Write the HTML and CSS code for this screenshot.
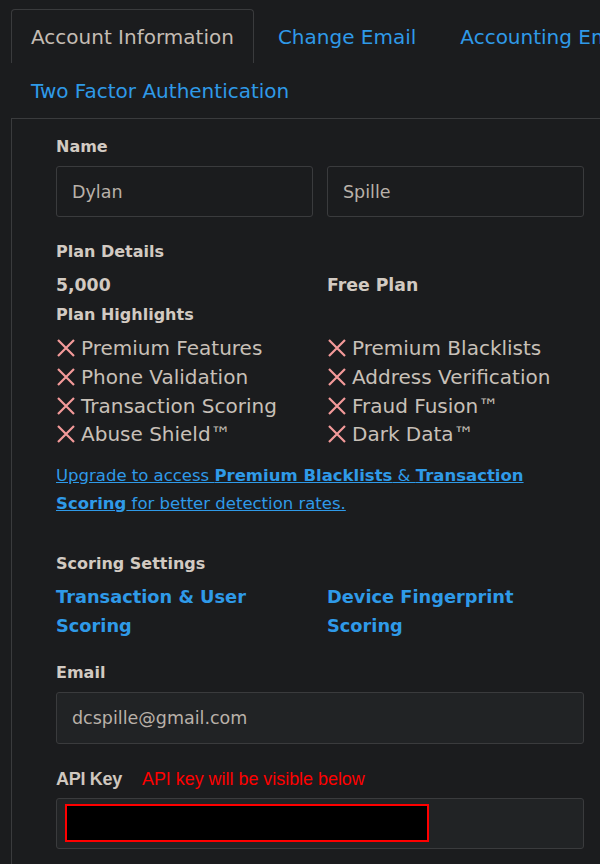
FILE: index.html
```html
<!DOCTYPE html>
<html>
<head>
<meta charset="utf-8">
<link rel="stylesheet" href="styles.css">
</head>
<body>
<div class="page">
  <ul class="tabs">
    <li class="tab active">Account Information</li>
    <li class="tab"><a href="#">Change Email</a></li>
    <li class="tab"><a href="#">Accounting Emails</a></li>
    <li class="tab"><a href="#">Two Factor Authentication</a></li>
  </ul>
  <div class="panel">
    <div class="label first">Name</div>
    <div class="row2">
      <div class="input">Dylan</div>
      <div class="input">Spille</div>
    </div>

    <div class="label plan-details">Plan Details</div>
    <div class="row2 plan-values">
      <div class="big">5,000</div>
      <div class="big">Free Plan</div>
    </div>

    <div class="label highlights">Plan Highlights</div>
    <div class="features">
      <div class="feat"><svg class="x" viewBox="0 0 20 20"><path d="M2 2L18 18M18 2L2 18"/></svg>Premium Features</div>
      <div class="feat"><svg class="x" viewBox="0 0 20 20"><path d="M2 2L18 18M18 2L2 18"/></svg>Premium Blacklists</div>
      <div class="feat"><svg class="x" viewBox="0 0 20 20"><path d="M2 2L18 18M18 2L2 18"/></svg>Phone Validation</div>
      <div class="feat"><svg class="x" viewBox="0 0 20 20"><path d="M2 2L18 18M18 2L2 18"/></svg>Address Verification</div>
      <div class="feat"><svg class="x" viewBox="0 0 20 20"><path d="M2 2L18 18M18 2L2 18"/></svg>Transaction Scoring</div>
      <div class="feat"><svg class="x" viewBox="0 0 20 20"><path d="M2 2L18 18M18 2L2 18"/></svg>Fraud Fusion™</div>
      <div class="feat"><svg class="x" viewBox="0 0 20 20"><path d="M2 2L18 18M18 2L2 18"/></svg>Abuse Shield™</div>
      <div class="feat"><svg class="x" viewBox="0 0 20 20"><path d="M2 2L18 18M18 2L2 18"/></svg>Dark Data™</div>
    </div>

    <p class="upgrade"><a href="#">Upgrade to access <b>Premium Blacklists</b> &amp; <b>Transaction Scoring</b> for better detection rates.</a></p>

    <div class="label scoring">Scoring Settings</div>
    <div class="row2 score-links">
      <a href="#">Transaction &amp; User Scoring</a>
      <a href="#">Device Fingerprint Scoring</a>
    </div>

    <div class="label email-label">Email</div>
    <div class="input filled">dcspille@gmail.com</div>

    <div class="label api-label"><span class="api-title">API Key</span><span class="api-note">API key will be visible below</span></div>
    <div class="input filled api-box"><div class="redacted"></div></div>
  </div>
</div>
</body>
</html>
```

FILE: styles.css
```css
html, body {
  margin: 0;
  padding: 0;
  background: #1b1c1e;
  overflow: hidden;
}
body {
  font-family: "DejaVu Sans", "Inter", sans-serif;
  color: #c4bcb4;
}
.page {
  padding: 9px 0 0 11px;
  width: 700px;
}
.tabs {
  list-style: none;
  margin: 0;
  padding: 0;
  display: flex;
  flex-wrap: wrap;
  width: 680px;
}
.tab {
  height: 54px;
  line-height: 54px;
  padding: 0 19px;
  font-size: 20px;
  box-sizing: border-box;
  border: 1px solid transparent;
  border-bottom: none;
  border-radius: 4px 4px 0 0;
  margin-right: 4px;
  white-space: nowrap;
}
.tab a {
  color: #2f9ae8;
  text-decoration: none;
}
.tab.active {
  border-color: #3a3b3d;
  color: #c4bcb4;
}
.panel {
  margin-top: 1px;
  border-top: 1px solid #3a3b3d;
  border-left: 1px solid #3a3b3d;
  padding: 16px 44px 30px 44px;
  width: 528px;
}
.label {
  font-weight: 700;
  font-size: 16px;
  line-height: 24px;
  color: #d2cac2;
}
.row2 {
  display: grid;
  grid-template-columns: 257px 257px;
  column-gap: 14px;
}
.first + .row2 {
  margin-top: 7px;
}
.input {
  box-sizing: border-box;
  height: 51px;
  border: 1px solid #3a3b3d;
  border-radius: 3px;
  padding: 0 15px;
  display: flex;
  align-items: center;
  font-size: 17.5px;
  color: #b9b1a9;
}
.plan-details {
  margin-top: 23px;
}
.plan-values {
  margin-top: 7px;
}
.big {
  font-weight: 700;
  font-size: 17.3px;
  line-height: 28px;
  color: #d2cac2;
}
.highlights {
  margin-top: 4px;
}
.features {
  margin-top: 7px;
  display: grid;
  grid-template-columns: 271px 257px;
}
.feat {
  display: flex;
  align-items: center;
  height: 28.7px;
  font-size: 20px;
  color: #c8c0b8;
  white-space: nowrap;
}
.x {
  width: 20px;
  height: 20px;
  margin-right: 5px;
  flex: none;
}
.x path {
  stroke: #f49a9a;
  stroke-width: 2.2;
  fill: none;
}
.upgrade {
  margin: 13px 0 0 0;
  font-size: 16.5px;
  line-height: 28px;
  width: 500px;
}
.upgrade a {
  color: #2f9ae8;
}
.upgrade b {
  font-weight: 700;
}
.scoring {
  margin-top: 34px;
}
.score-links {
  margin-top: 6px;
}
.score-links a {
  color: #2f9ae8;
  text-decoration: none;
  font-weight: 700;
  font-size: 17.8px;
  line-height: 29px;
  width: 200px;
}
.email-label {
  margin-top: 21px;
}
.filled {
  margin-top: 7px;
  height: 52px;
  background: #212325;
}
.api-label {
  margin-top: 23px;
  display: flex;
  align-items: baseline;
}
.api-title {
  font-family: "Liberation Sans", Arial, sans-serif;
  font-size: 18px;
  letter-spacing: -0.3px;
  color: #cfc7bf;
  width: 86px;
}
.api-note {
  font-family: "Liberation Sans", Arial, sans-serif;
  font-weight: 400;
  font-size: 17.9px;
  color: #ff0000;
}
.api-box {
  height: 51px;
  padding: 0 0 0 8px;
}
.redacted {
  box-sizing: border-box;
  width: 364px;
  height: 38px;
  background: #000;
  border: 2px solid #ff0000;
}
```
